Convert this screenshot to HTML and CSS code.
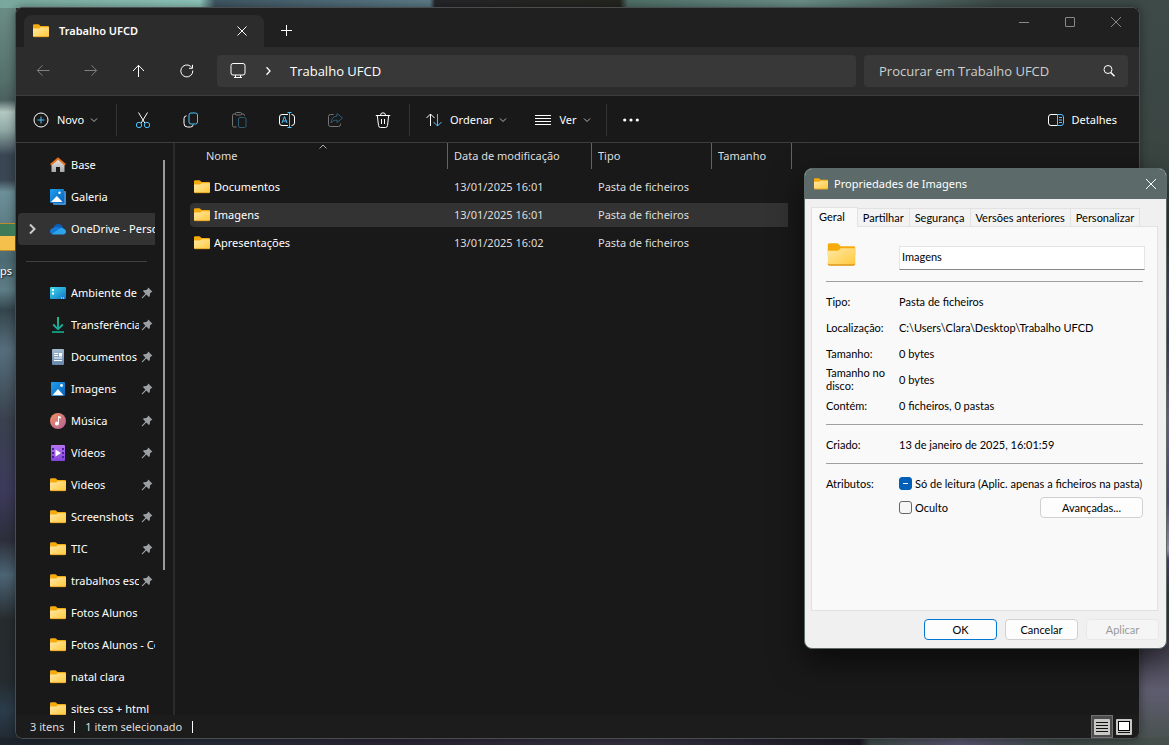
FILE: index.html
```html
<!DOCTYPE html>
<html lang="pt">
<head>
<meta charset="utf-8">
<title>Trabalho UFCD</title>
<link rel="stylesheet" href="styles.css">
</head>
<body class="desktop">
<svg class="sprite" aria-hidden="true">
  <defs>
    <linearGradient id="gFolder" x1="0" y1="0" x2="1" y2="1"><stop offset="0" stop-color="#ffe9a6"/><stop offset="1" stop-color="#ffc83a"/></linearGradient>
    <linearGradient id="gBlue" x1="0" y1="0" x2="1" y2="1"><stop offset="0" stop-color="#1f9ff0"/><stop offset="1" stop-color="#0a62b8"/></linearGradient>
    <linearGradient id="gDesk" x1="0" y1="0" x2="1" y2="1"><stop offset="0" stop-color="#3fdcea"/><stop offset="1" stop-color="#1173c9"/></linearGradient>
    <linearGradient id="gMusic" x1="0" y1="0" x2="1" y2="1"><stop offset="0" stop-color="#f5915c"/><stop offset="1" stop-color="#b0609c"/></linearGradient>
    <linearGradient id="gVideo" x1="0" y1="0" x2="0" y2="1"><stop offset="0" stop-color="#b673f2"/><stop offset="1" stop-color="#8344dd"/></linearGradient>
    <linearGradient id="gDown" x1="0" y1="0" x2="0" y2="1"><stop offset="0" stop-color="#2fc98c"/><stop offset="1" stop-color="#12a8a0"/></linearGradient>
    <linearGradient id="gDoc" x1="0" y1="0" x2="0" y2="1"><stop offset="0" stop-color="#a5bad0"/><stop offset="1" stop-color="#6687aa"/></linearGradient>
    <linearGradient id="gHome" x1="0" y1="0" x2="0" y2="1"><stop offset="0" stop-color="#e8e8e8"/><stop offset="1" stop-color="#a9a9a9"/></linearGradient>
  </defs>
  <symbol id="folder" viewBox="0 0 16 16">
    <path fill="#f5ab0b" stroke="none" d="M0 2.500Q0 1.300 1.200 1.300H5.200Q6 1.300 6.500 1.900L7.500 3H15Q16 3 16 4V8H0Z"/>
    <path fill="url(#gFolder)" stroke="none" d="M0 5.500H5.500Q6.300 5.500 6.800 5L7.500 4.200H16V13Q16 14 15 14H1Q0 14 0 13Z"/>
    <path fill="none" stroke="#e0991c" stroke-width=".8" d="M.4 13Q.5 13.700 1.200 13.700H14.800Q15.500 13.700 15.600 13"/>
  </symbol>
  <symbol id="pin" viewBox="0 0 12 12">
    <path fill="#9aa0a4" d="M7.300.6L11.400 4.700L10.300 5.300L9 6.600L8.800 9.300L7.900 10L5.300 7.600L1.600 11.200L.8 11.200L.8 10.400L4.400 6.700L2 4.100L2.700 3.200L5.400 3L6.700 1.700Z"/>
  </symbol>
  <symbol id="down" viewBox="0 0 8 8"><path fill="none" stroke="#b8b8b8" d="M1 2.500L4 5.500L7 2.500"/></symbol>
</svg>

<div class="desk-icon"><div class="desk-thumb"></div><span class="desk-label">ps</span></div>

<main class="window">
  <header class="titlebar">
    <div class="tab">
      <svg class="i16"><use href="#folder"/></svg>
      <span class="tab-title">Trabalho UFCD</span>
      <button class="plain tab-close" aria-label="Fechar separador"><svg class="i12" viewBox="0 0 12 12"><path d="M1.500 1.500L10.500 10.500M10.500 1.500L1.500 10.500"/></svg></button>
    </div>
    <button class="plain new-tab" aria-label="Novo separador"><svg class="i12" viewBox="0 0 12 12"><path d="M5.500 0V11M0 5.500H11"/></svg></button>
    <div class="controls">
      <button class="plain ctl" aria-label="Minimizar"><svg class="i12" viewBox="0 0 12 12"><path d="M1 6.500H11"/></svg></button>
      <button class="plain ctl" aria-label="Maximizar"><svg class="i12" viewBox="0 0 12 12"><rect x="1.500" y="1.500" width="9" height="9" rx=".5"/></svg></button>
      <button class="plain ctl" aria-label="Fechar"><svg class="i12" viewBox="0 0 12 12"><path d="M1 1L11 11M11 1L1 11"/></svg></button>
    </div>
  </header>

  <nav class="navbar">
    <div class="nav-buttons">
      <button class="plain nav-btn off" aria-label="Retroceder"><svg class="i16" viewBox="0 0 16 16"><path d="M14.500 7.500H2.500M7.500 2.300L2.300 7.500L7.500 12.700"/></svg></button>
      <button class="plain nav-btn off" aria-label="Avançar"><svg class="i16" viewBox="0 0 16 16"><path d="M1.500 7.500H13.500M8.500 2.300L13.700 7.500L8.500 12.700"/></svg></button>
      <button class="plain nav-btn" aria-label="Acima"><svg class="i16" viewBox="0 0 16 16"><path d="M7.500 14V2.500M2 8L7.500 2.300L13 8"/></svg></button>
      <button class="plain nav-btn" aria-label="Atualizar"><svg class="i16" viewBox="0 0 16 16"><path d="M13.800 7.500A6 6 0 1 1 11.500 3.200L13 4.700M13.500 1.800V5.300H10"/></svg></button>
    </div>
    <div class="address">
      <svg class="i18" viewBox="0 0 18 18"><rect x="2" y="1.500" width="14" height="11.500" rx="2"/><path d="M6.500 13V15.500M11.500 13V15.500M5 15.500H13"/></svg>
      <svg class="i12 crumb" viewBox="0 0 12 12"><path stroke-width="1.300" d="M4.500 2.300L8 6L4.500 9.700"/></svg>
      <span>Trabalho UFCD</span>
    </div>
    <label class="search">
      <input class="search-input" type="text" placeholder="Procurar em Trabalho UFCD" aria-label="Procurar">
      <svg class="i14" viewBox="0 0 14 14"><circle cx="6" cy="5.500" r="4"/><path stroke-width="1.400" d="M8.800 8.500L12.500 12.300"/></svg>
    </label>
  </nav>

  <div class="toolbar">
    <button class="plain tool tool-new"><svg class="i16" viewBox="0 0 16 16"><circle cx="8" cy="8" r="7"/><path stroke="#4cc2ff" d="M8 4.500V11.500M4.500 8H11.500"/></svg>Novo<svg class="i8"><use href="#down"/></svg></button>
    <span class="sep"></span>
    <div class="tool-icons">
      <button class="plain tool-icon" aria-label="Cortar"><svg class="i18" viewBox="0 0 18 18"><path d="M4.500 1.500L10.800 12M13.500 1.500L7.200 12"/><g stroke="#4cc2ff"><circle cx="5" cy="14" r="2.700"/><circle cx="13" cy="14" r="2.700"/></g></svg></button>
      <button class="plain tool-icon" aria-label="Copiar"><svg class="i18" viewBox="0 0 18 18"><path d="M4.500 4.800Q2 5 2 7.500V12.500Q2 16 5.500 16H8.500Q11 16 11.200 13.700"/><rect x="7" y="2" width="8.500" height="11" rx="2" stroke="#4cc2ff"/></svg></button>
      <button class="plain tool-icon off" aria-label="Colar"><svg class="i18" viewBox="0 0 18 18"><path d="M5.500 3H4Q2.500 3 2.500 4.500V14.500Q2.500 16 4 16H6.500M11.500 3H13Q14.500 3 14.500 4.500V5"/><rect x="5.500" y="1.500" width="6" height="2.500" rx="1"/><rect x="8.500" y="6.500" width="7.500" height="10" rx="1.500" stroke="#4cc2ff"/></svg></button>
      <button class="plain tool-icon" aria-label="Mudar o nome"><svg class="i18" viewBox="0 0 18 18"><path d="M10 3.500H4Q1.500 3.500 1.500 6V12Q1.500 14.500 4 14.500H10M13.500 3.500Q16.500 3.500 16.500 6V12Q16.500 14.500 13.500 14.500"/><path stroke="#4cc2ff" d="M4 12L6.500 5.500L9 12M4.900 10H8.300M11.500 1.500V16.500M9.500 1.500H13.500M9.500 16.500H13.500"/></svg></button>
      <button class="plain tool-icon off" aria-label="Partilhar"><svg class="i18" viewBox="0 0 18 18"><path d="M7.500 3.500H4.500Q2.500 3.500 2.500 5.500V13.500Q2.500 15.500 4.500 15.500H12.500Q14.500 15.500 14.500 13.500V12.500"/><path stroke="#4cc2ff" d="M11 2.500L16.500 7L11 11.500V9Q7.500 8.500 5 12Q5.500 5.500 11 5Z"/></svg></button>
      <button class="plain tool-icon" aria-label="Eliminar"><svg class="i18" viewBox="0 0 18 18"><path d="M1.800 4.500H16.200M6.500 4.300Q6.500 1.800 9 1.800Q11.500 1.800 11.500 4.300M3.300 4.500L4.500 14.500Q4.700 16.500 6.500 16.500H11.500Q13.300 16.500 13.500 14.500L14.700 4.500M7.500 8V13M10.500 8V13"/></svg></button>
    </div>
    <span class="sep"></span>
    <button class="plain tool tool-sort"><svg class="i16" viewBox="0 0 16 16"><path d="M4.500 14V2M.5 6L4.500 2L8.500 6"/><path stroke="#4cc2ff" d="M11.500 2V14M7.500 10L11.500 14L15.500 10"/></svg>Ordenar<svg class="i8"><use href="#down"/></svg></button>
    <button class="plain tool tool-view"><svg class="i16" viewBox="0 0 16 16"><path d="M0 3.500H16M0 6.500H16M0 9.500H16M0 12.500H16"/></svg>Ver<svg class="i8"><use href="#down"/></svg></button>
    <span class="sep"></span>
    <button class="plain tool-icon" aria-label="Ver mais"><svg class="i16" viewBox="0 0 16 16"><g fill="#fff" stroke="none"><circle cx="1.700" cy="8" r="1.600"/><circle cx="8" cy="8" r="1.600"/><circle cx="14.300" cy="8" r="1.600"/></g></svg></button>
    <button class="plain tool tool-details"><svg class="i16" viewBox="0 0 16 16"><path d="M9.500 2.500H3Q.5 2.500 .5 5V11Q.5 13.500 3 13.500H9.500"/><path stroke="#4cc2ff" d="M9.500 2.500H13Q15.500 2.500 15.500 5V11Q15.500 13.500 13 13.500H9.500ZM11 5.500H14M11 8H14M11 10.500H14"/></svg>Detalhes</button>
  </div>

  <div class="content">
    <aside class="sidebar">
      <div class="side-list">
        <a class="side" href="#"><svg class="i16" viewBox="0 0 16 16"><path fill="url(#gHome)" d="M1.500 7L8 1.500L14.500 7V14.500Q14.500 15 14 15H10V10H6V15H2Q1.500 15 1.500 14.500Z"/><path fill="none" stroke="#e8711c" stroke-width="2" d="M.7 7.800L8 1.500L15.300 7.800"/></svg><span class="name">Base</span></a>
        <a class="side" href="#"><svg class="i16" viewBox="0 0 16 16"><rect x="3" y="2" width="13" height="14" rx="1" fill="#3b8cd0"/><rect width="14" height="14" rx="1" fill="url(#gBlue)"/><path fill="#fff" d="M1 13L6.800 7L12.600 13Z"/><circle cx="9.500" cy="3.800" r="1.200" fill="#fff"/></svg><span class="name">Galeria</span></a>
        <a class="side current" href="#"><svg class="i12 expand" viewBox="0 0 12 12"><path d="M4 1.500L8.500 6L4 10.500"/></svg><svg class="i16" viewBox="0 0 16 16"><path fill="#0f5fb8" d="M3 8.500Q3.500 3.500 8 3Q12 3 13 7L9 11Z"/><path fill="#1478d4" d="M3.300 7Q0 7.500 0 10.500Q.2 13 3.500 13.300L12 8Q7 4.500 3.300 7Z"/><path fill="#2ba4ec" d="M2 13L9.500 7.500Q11.500 6.200 13.500 7.500Q16 8.500 16 10.500Q15.800 13.300 13 13.500H4Q2.800 13.500 2 13Z"/></svg><span class="name">OneDrive - Personal</span></a>
        <div class="side-rule"></div>
        <a class="side" href="#"><svg class="i16" viewBox="0 0 16 16"><rect y="2" width="16" height="12" rx="1" fill="url(#gDesk)"/><path fill="#fff" d="M2 4H4V6H2ZM2 7.500H4V9.500H2ZM11 12.500H12V13.500H11ZM13 12.500H14V13.500H13Z"/></svg><span class="name">Ambiente de trabalho</span><svg class="i12 pin"><use href="#pin"/></svg></a>
        <a class="side" href="#"><svg class="i16" viewBox="0 0 16 16"><path fill="none" stroke="url(#gDown)" stroke-width="1.800" d="M8.010 0V12M3.200 7.500L8 12.300L12.800 7.500"/><rect x="2" y="14.200" width="12" height="1.700" fill="#12a889"/></svg><span class="name">Transferências</span><svg class="i12 pin"><use href="#pin"/></svg></a>
        <a class="side" href="#"><svg class="i16" viewBox="0 0 16 16"><rect x="2" width="12" height="16" rx="1" fill="url(#gDoc)"/><path fill="#fff" d="M4 4H8V5H4ZM4 6H8V7H4ZM9 4H12V7.500H9ZM4 8.500H12V9.500H4ZM4 11H12V12H4Z"/></svg><span class="name">Documentos</span><svg class="i12 pin"><use href="#pin"/></svg></a>
        <a class="side" href="#"><svg class="i16" viewBox="0 0 16 16"><rect x="1" y="1" width="14" height="14" rx="1" fill="url(#gBlue)"/><path fill="#fff" d="M2.500 14.200L8 8L13.500 14.200Z"/><circle cx="11.500" cy="4.500" r="1.400" fill="#fff"/></svg><span class="name">Imagens</span><svg class="i12 pin"><use href="#pin"/></svg></a>
        <a class="side" href="#"><svg class="i16" viewBox="0 0 16 16"><circle cx="8" cy="8" r="8" fill="url(#gMusic)"/><path fill="#fff" d="M8 3L11 3.800V5.500L9 5V10.500A2 1.900 0 1 1 8 9Z"/></svg><span class="name">Música</span><svg class="i12 pin"><use href="#pin"/></svg></a>
        <a class="side" href="#"><svg class="i16" viewBox="0 0 16 16"><rect x="1" width="14" height="16" rx="1" fill="url(#gVideo)"/><path fill="#fff" d="M5.500 4.500L11 8L5.500 11.500Z"/><path fill="#4b2396" d="M2 3H4V5H2ZM2 7H4V9H2ZM2 11H4V13H2ZM12 3H14V5H12ZM12 7H14V9H12ZM12 11H14V13H12Z"/></svg><span class="name">Vídeos</span><svg class="i12 pin"><use href="#pin"/></svg></a>
        <a class="side" href="#"><svg class="i16"><use href="#folder"/></svg><span class="name">Videos</span><svg class="i12 pin"><use href="#pin"/></svg></a>
        <a class="side" href="#"><svg class="i16"><use href="#folder"/></svg><span class="name">Screenshots</span><svg class="i12 pin"><use href="#pin"/></svg></a>
        <a class="side" href="#"><svg class="i16"><use href="#folder"/></svg><span class="name">TIC</span><svg class="i12 pin"><use href="#pin"/></svg></a>
        <a class="side" href="#"><svg class="i16"><use href="#folder"/></svg><span class="name">trabalhos escola</span><svg class="i12 pin"><use href="#pin"/></svg></a>
        <a class="side" href="#"><svg class="i16"><use href="#folder"/></svg><span class="name">Fotos Alunos</span></a>
        <a class="side" href="#"><svg class="i16"><use href="#folder"/></svg><span class="name">Fotos Alunos - Cópia</span></a>
        <a class="side" href="#"><svg class="i16"><use href="#folder"/></svg><span class="name">natal clara</span></a>
        <a class="side" href="#"><svg class="i16"><use href="#folder"/></svg><span class="name">sites css + html</span></a>
      </div>
      <div class="scrollbar"></div>
    </aside>
    <section class="files">
      <svg class="i8 sort-mark" viewBox="0 0 8 8"><path d="M.5 5.500L4 2L7.500 5.500"/></svg>
      <table class="table">
        <colgroup><col class="c-name"><col class="c-date"><col class="c-type"><col class="c-size"></colgroup>
        <thead><tr><th class="first">Nome</th><th>Data de modificação</th><th>Tipo</th><th>Tamanho</th></tr></thead>
        <tbody>
          <tr><td><span class="file"><svg class="i16"><use href="#folder"/></svg>Documentos</span></td><td>13/01/2025 16:01</td><td>Pasta de ficheiros</td><td></td></tr>
          <tr class="selected"><td><span class="file"><svg class="i16"><use href="#folder"/></svg>Imagens</span></td><td>13/01/2025 16:01</td><td>Pasta de ficheiros</td><td></td></tr>
          <tr><td><span class="file"><svg class="i16"><use href="#folder"/></svg>Apresentações</span></td><td>13/01/2025 16:02</td><td>Pasta de ficheiros</td><td></td></tr>
        </tbody>
      </table>
    </section>
  </div>

  <footer class="status">
    <span>3 itens</span><span class="bar"></span><span>1 item selecionado</span><span class="bar"></span>
    <div class="views">
      <button class="plain view on" aria-label="Detalhes"><svg class="i16" viewBox="0 0 16 16"><rect width="16" height="16" rx="1" fill="#c8c8c4" stroke="none"/><path stroke="#111" d="M2 3.500H14M2 6.500H14M2 9.500H14M2 12.500H14"/></svg></button>
      <button class="plain view" aria-label="Miniaturas"><svg class="i16" viewBox="0 0 16 16"><rect width="16" height="16" rx="1" fill="#c8c8c4" stroke="none"/><rect x="2.500" y="2.500" width="11" height="9" fill="#fff" stroke="#000"/><path stroke="#111" d="M2 13.500H14"/></svg></button>
    </div>
  </footer>
</main>

<div class="dialog" role="dialog" aria-labelledby="dlgTitle">
  <header class="dlg-title">
    <svg class="i14"><use href="#folder"/></svg>
    <span id="dlgTitle">Propriedades de Imagens</span>
    <button class="plain dlg-close" aria-label="Fechar"><svg class="i12" viewBox="0 0 12 12"><path d="M1 1L11 11M11 1L1 11"/></svg></button>
  </header>
  <div class="dlg-body">
    <div class="dlg-tabs" role="tablist">
      <button class="dlg-tab active" role="tab" aria-selected="true">Geral</button>
      <button class="dlg-tab" role="tab">Partilhar</button>
      <button class="dlg-tab" role="tab">Segurança</button>
      <button class="dlg-tab" role="tab">Versões anteriores</button>
      <button class="dlg-tab" role="tab">Personalizar</button>
    </div>
    <div class="panel">
      <div class="head"><svg class="i28" viewBox="0 0 16 16"><use href="#folder" width="16" height="16"/></svg><input class="name-input" type="text" value="Imagens" aria-label="Nome"></div>
      <hr class="rule">
      <dl class="props">
        <dt>Tipo:</dt><dd>Pasta de ficheiros</dd>
        <dt>Localização:</dt><dd>C:\Users\Clara\Desktop\Trabalho UFCD</dd>
        <dt>Tamanho:</dt><dd>0 bytes</dd>
        <dt>Tamanho no disco:</dt><dd>0 bytes</dd>
        <dt>Contém:</dt><dd>0 ficheiros, 0 pastas</dd>
      </dl>
      <hr class="rule">
      <dl class="props"><dt>Criado:</dt><dd>13 de janeiro de 2025, 16:01:59</dd></dl>
      <hr class="rule">
      <div class="attrs">
        <span class="attr-label">Atributos:</span>
        <div class="attr-body">
          <label class="check"><input class="box mixed" type="checkbox" aria-checked="mixed">Só de leitura (Aplic. apenas a ficheiros na pasta)</label>
          <div class="attr-line">
            <label class="check"><input class="box" type="checkbox">Oculto</label>
            <button class="btn advanced">Avançadas...</button>
          </div>
        </div>
      </div>
    </div>
    <div class="actions">
      <button class="btn primary">OK</button>
      <button class="btn">Cancelar</button>
      <button class="btn" disabled>Aplicar</button>
    </div>
  </div>
</div>
</body>
</html>
```
FILE: styles.css
```css
* { box-sizing: border-box; }

.desktop {
  margin: 0;
  height: 100vh;
  padding: 7px 29px 6px 15px;
  overflow: hidden;
  position: relative;
  font-family: "Noto Sans", "Open Sans", sans-serif;
  font-size: 11px;
  line-height: 16px;
  color: #fff;
  background:
    linear-gradient(90deg, #79a79d 0, #8fc6ba 200px, #3f5663 215px, #5b7a86 430px, #26262a 435px, #25251f 620px, #4f6f66 628px, #6b8f88 800px, #3d4a47 1000px) 0 0 / 100% 8px no-repeat,
    linear-gradient(90deg, #1d242c 0, #262b36 220px, #2a2433 400px, #34303f 640px, #1d1a26 860px, #3a4644 870px, #55516b 960px, #3a4644 1060px, #46504c 100%) 0 100% / 100% 7px no-repeat,
    linear-gradient(180deg, #6d8f88 0, #55706b 80px, #4c5f60 100px, #b4c8c2 112px, #90aaa6 130px, #3a4653 155px, #3a4653 180px, #6d9098 192px, #4d6a72 260px, #5d7d86 290px, #34454c 310px, #566e7c 350px, #39414d 420px, #3c3a5c 490px, #2c2f3a 540px, #4c6474 575px, #262b2e 620px, #252b2f 680px, #2b3c4a 710px, #1f262e 100%) 0 0 / 16px 100% no-repeat,
    linear-gradient(180deg, #3d4a47 0, #3a4542 160px, #3b4443 240px, #5a5a86 300px, #4a4f6a 340px, #8b83b4 420px, #6a5fa0 500px, #c9bfe0 550px, #5c4f92 560px, #3a4844 600px, #4b4757 650px, #5f5d70 690px, #46504c 100%) 100% 0 / 31px 100% no-repeat,
    #2c3434;
}

.sprite { position: absolute; width: 0; height: 0; }
.i8 { width: 8px; height: 8px; }
.i12 { width: 12px; height: 12px; }
.i14 { width: 14px; height: 14px; }
.i16 { width: 16px; height: 16px; }
.i18 { width: 18px; height: 18px; }
.i28 { width: 29px; height: 28px; }
svg { flex: none; display: block; fill: none; stroke: currentColor; }
.side > svg { stroke: none; }

.plain {
  display: flex;
  align-items: center;
  justify-content: center;
  padding: 0;
  border: 0;
  background: none;
  color: inherit;
  font: inherit;
}

.desk-icon { position: absolute; left: 0; top: 223px; width: 15px; overflow: hidden; }
.desk-thumb { height: 28px; border: solid #c08a28; border-width: 1px 0; background: linear-gradient(#3f7a58 0 12px, #f6c04c 12px); }
.desk-label { display: block; margin-top: 12px; text-shadow: 1px 1px 2px #000; }

.window {
  height: 100%;
  display: flex;
  flex-direction: column;
  border: 1px solid #4a4d4d;
  border-radius: 8px;
  overflow: hidden;
  background: #191919;
  box-shadow: 0 0 10px #0006;
}

.titlebar { display: flex; height: 39px; padding-left: 8px; background: #202020; }
.tab {
  display: flex;
  align-items: center;
  width: 240px;
  margin-top: 7px;
  padding: 0 12px 0 9px;
  gap: 10px;
  border-radius: 8px 8px 0 0;
  background: #2c2c2c;
}
.tab-title { font-weight: 600; flex: 1; }
.tab-close { width: 20px; height: 20px; }
.new-tab { width: 46px; margin-top: 7px; }
.controls { display: flex; margin-left: auto; height: 28px; color: #8a8a8a; }
.ctl { width: 46px; }

.navbar { display: flex; gap: 8px; padding: 8px 11px 8px 3px; background: #2c2c2c; border-bottom: 1px solid #3d3d3d; }
.nav-buttons { display: flex; margin-right: -2px; }
.nav-btn { width: 48px; }
.off { opacity: .4; }
.address, .search { display: flex; align-items: center; height: 32px; border-radius: 4px; background: #383838; font-family: "Open Sans", sans-serif; font-size: 13px; }
.address { flex: 1; padding-left: 12px; }
.crumb { margin: 0 16px 0 15px; }
.search { width: 264px; padding: 0 12px 0 15px; }
.search-input { flex: 1; min-width: 0; padding: 0; border: 0; outline: 0; background: none; color: #fff; font: inherit; }
.search-input::placeholder { color: #cfcfcf; opacity: 1; }

.toolbar { display: flex; align-items: center; height: 47px; padding: 2px 22px 0 17px; border-bottom: 1px solid #3d3d3d; }
.tool { gap: 8px; height: 32px; }
.tool .i8 { margin-left: -2px; }
.tool-new { width: 68px; justify-content: flex-start; }
.sep { width: 1px; height: 32px; margin-left: 15px; background: #333; }
.tool-icons { display: flex; margin: 0 -13px 0 2px; }
.tool-icon { width: 48px; height: 32px; }
.tool-sort { margin-left: 16px; }
.tool-view { margin-left: 28px; }
.tool-details { margin-left: auto; }

.content { flex: 1; display: flex; min-height: 0; }
.sidebar { display: flex; width: 159px; border-right: 2px solid #2b2b2b; overflow: hidden; }
.side-list { width: 139px; padding: 6px 0 0 2px; overflow: hidden; }
.side { display: flex; align-items: center; height: 32px; padding-left: 32px; color: #fff; text-decoration: none; white-space: nowrap; }
.side .name { flex: 1; min-width: 0; margin-left: 5px; overflow: hidden; }
.side .pin { margin: 0 2px; }
.side.current { padding-left: 8px; background: #333; border-radius: 4px 0 0 4px; }
.side .expand { margin-right: 12px; stroke: #ccc; stroke-width: 2; }
.side-rule { height: 32px; margin: 0 8px; background: linear-gradient(#404040, #404040) 0 50% / 100% 1px no-repeat; }
.scrollbar { width: 2px; height: 410px; margin: 17px 0 0 8px; background: #9a9a9a; }

.files { position: relative; flex: 1; min-width: 0; padding-left: 15px; }
.sort-mark { position: absolute; left: 144px; top: 0; stroke: #aaa; }
.table { table-layout: fixed; width: 602px; border-collapse: separate; border-spacing: 0; }
.c-name { width: 258px; }
.c-date { width: 144px; }
.c-type { width: 120px; }
.c-size { width: 80px; }
.table th { height: 26px; padding: 0 0 0 6px; border-right: 1px solid #636363; font-weight: 400; text-align: left; color: #dedede; }
.table th.first { padding-left: 16px; }
.table td { height: 28px; padding: 0 0 0 6px; border: solid transparent; border-width: 2px 0; background-clip: padding-box; color: #dedede; }
.table td:first-child { padding-left: 4px; color: #fff; border-radius: 5px 0 0 5px; }
.table td:last-child { border-right-width: 4px; }
.table tbody::before { content: ""; display: table-row; height: 4px; }
.file { display: flex; align-items: center; gap: 4px; }
.selected td { background-color: #333; }

.status { display: flex; align-items: center; height: 23px; padding: 0 4px 0 14px; background: #1c1c1c; color: #dedede; }
.bar { width: 1px; height: 12px; margin: 0 10px; background: #fff; }
.views { display: flex; margin-left: auto; height: 23px; }
.view { width: 22px; border: 1px solid transparent; }
.view.on { background: #4d4d4d; border-color: #707070; }

.dialog {
  position: absolute;
  left: 804px;
  top: 168px;
  width: 363px;
  border: 1px solid #5c6b69;
  border-radius: 8px;
  overflow: hidden;
  background: #f0f0f0;
  color: #000;
  box-shadow: 0 12px 32px #0009;
}
.dlg-title { display: flex; align-items: center; height: 30px; padding: 0 9px; gap: 6px; background: #5c6b69; color: #fff; }
.dlg-close { margin-left: auto; }
.dlg-body { padding: 8px 7px 8px 6px; font-family: Lato, Roboto, sans-serif; font-size: 11px; line-height: 13px; }
.dlg-tabs { display: flex; align-items: flex-end; }
.dlg-tab { height: 18px; padding: 0 5px; border: 1px solid #e2e2e2; border-width: 1px 1px 0 0; background: #f3f3f3; color: #000; font: inherit; }
.dlg-tab.active { height: 20px; padding: 0 12px 2px 7px; margin-bottom: -1px; border-left-width: 1px; background: #f9f9f9; }
.panel { height: 385px; margin-right: 1px; padding: 14px; border: 1px solid #e2e2e2; background: #f9f9f9; }
.head { display: flex; justify-content: space-between; padding-left: 1px; }
.name-input { width: 246px; height: 24px; margin: 5px -2px 0 0; padding: 0 2px 4px; border: 1px solid #e5e5e5; border-bottom: 1px solid #868686; outline: 0; background: #fff; font: inherit; color: #000; }
.rule { margin: 11px 0 0; border: 0; border-top: 1px solid #a0a0a0; }
.props { display: grid; grid-template-columns: 66px 1fr; column-gap: 7px; grid-auto-rows: 26px; align-items: center; margin: 6px 0 -5px; }
.props dd { margin: 0; }
.attrs { display: grid; grid-template-columns: 66px 1fr; column-gap: 7px; margin-top: 13px; }
.check { display: flex; align-items: center; gap: 3px; white-space: nowrap; }
.box { appearance: none; flex: none; width: 13px; height: 13px; margin: 0; border: 1px solid #666; border-radius: 3px; background: #f6f6f6; }
.box.mixed { border-color: #005fb8; background: linear-gradient(#fff, #fff) 50% 50% / 5px 1px no-repeat #005fb8; }
.attr-body { min-width: 0; }
.attr-line { display: flex; justify-content: space-between; align-items: center; margin-top: 7px; }
.btn { width: 73px; height: 21px; padding: 0; border: 1px solid #d0d0d0; border-radius: 4px; background: #fdfdfd; font: inherit; color: #000; }
.btn.primary { border-color: #0078d4; }
.btn:disabled { border-color: #e8e8e8; background: #f5f5f5; color: #9a9a9a; }
.btn.advanced { width: 103px; }
.actions { display: flex; justify-content: flex-end; gap: 8px; margin-top: 8px; }
```
